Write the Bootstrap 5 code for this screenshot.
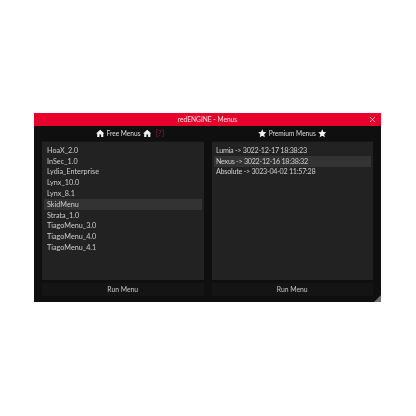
<!DOCTYPE html>
<html lang="en">
<head>
<meta charset="utf-8">
<title>redENGINE - Menus</title>
<link rel="stylesheet" href="https://cdn.jsdelivr.net/npm/bootstrap@5.3.0/dist/css/bootstrap.min.css">
<style>
html,body{height:416px;background:#fff;font-family:"Lato","Liberation Sans",sans-serif;font-size:7.2px;line-height:1;font-variant-ligatures:none}
.stage{width:416px;height:416px;padding:113px 35px 0 34px}
.win{width:347px;height:189px;background:#0f0f0f;position:relative;filter:blur(.25px)}
.titlebar{height:13px;background:#e8002d;color:#f2e6e8;position:relative;font-size:6.6px}
.closex{position:absolute;right:5px;top:3px;width:7px;height:7px}
.cols{padding:0 8px;gap:8px;height:176px}
.colm{width:161.5px}
.head{height:16px;color:#ddd;gap:2px;border-bottom:1px solid #161616;font-size:6.6px}
.head.pushed{padding-left:15px}
.ico{width:8.5px;height:8.5px;fill:#f2f2f2;flex:none}
.hint{color:#c21a30;margin-left:3px;letter-spacing:.5px}
.pane{height:138px;background:#222;padding:3px 2px 2px}
.rowitem{height:10.8px;padding-left:3px;color:#cfcfcf;display:flex;align-items:center;white-space:nowrap;letter-spacing:.03px}
.rowitem.sel{background:#333}
.pane-dated .rowitem{letter-spacing:-.27px;padding-left:2.5px}
.runbtn{height:13px;margin-top:3px;background:#141414;color:#c8c8c8;font-size:6.8px;line-height:1;border:0;border-radius:0;padding:0;width:100%}
.grip{position:absolute;right:0;bottom:0;width:0;height:0;border-style:solid;border-width:0 0 7px 7px;border-color:transparent transparent #6e6e6e transparent}
</style>
</head>
<body>
<div class="stage">
  <div class="win">
    <div class="titlebar d-flex align-items-center justify-content-center">
      <span>redENGINE - Menus</span>
      <svg class="closex" viewBox="0 0 7 7"><path d="M1 1L6 6M6 1L1 6" stroke="#f5dfe3" stroke-width=".8" fill="none"/></svg>
    </div>
    <div class="cols d-flex">
      <div class="colm d-flex flex-column">
        <div class="head pushed d-flex align-items-center justify-content-center">
          <svg class="ico" viewBox="0 0 10 10"><path d="M5 .8L0 5.4h1.4V9.4h2.6V6.4h2V9.4h2.6V5.4H10z"/></svg>
          <span>Free Menus</span>
          <svg class="ico" viewBox="0 0 10 10"><path d="M5 .8L0 5.4h1.4V9.4h2.6V6.4h2V9.4h2.6V5.4H10z"/></svg>
          <span class="hint">[?]</span>
        </div>
        <div class="pane">
          <div class="rowitem">HoaX_2.0</div>
          <div class="rowitem">InSec_1.0</div>
          <div class="rowitem">Lydia_Enterprise</div>
          <div class="rowitem">Lynx_10.0</div>
          <div class="rowitem">Lynx_8.1</div>
          <div class="rowitem sel">SkidMenu</div>
          <div class="rowitem">Strata_1.0</div>
          <div class="rowitem">TiagoMenu_3.0</div>
          <div class="rowitem">TiagoMenu_4.0</div>
          <div class="rowitem">TiagoMenu_4.1</div>
        </div>
        <button class="btn runbtn" type="button">Run Menu</button>
      </div>
      <div class="colm d-flex flex-column">
        <div class="head d-flex align-items-center justify-content-center">
          <svg class="ico" viewBox="0 0 10 10"><path d="M5 .4L6.4 3.5 9.8 3.9 7.3 6.2 8 9.6 5 7.9 2 9.6 2.7 6.2.2 3.9 3.6 3.5z"/></svg>
          <span>Premium Menus</span>
          <svg class="ico" viewBox="0 0 10 10"><path d="M5 .4L6.4 3.5 9.8 3.9 7.3 6.2 8 9.6 5 7.9 2 9.6 2.7 6.2.2 3.9 3.6 3.5z"/></svg>
        </div>
        <div class="pane pane-dated">
          <div class="rowitem">Lumia -&gt; 3022-12-17 18:38:23</div>
          <div class="rowitem sel">Nexus -&gt; 3022-12-16 18:38:32</div>
          <div class="rowitem">Absolute -&gt; 3023-04-02 11:57:28</div>
        </div>
        <button class="btn runbtn" type="button">Run Menu</button>
      </div>
    </div>
    <div class="grip"></div>
  </div>
</div>
<script src="https://cdn.jsdelivr.net/npm/bootstrap@5.3.0/dist/js/bootstrap.bundle.min.js"></script>
</body>
</html>
